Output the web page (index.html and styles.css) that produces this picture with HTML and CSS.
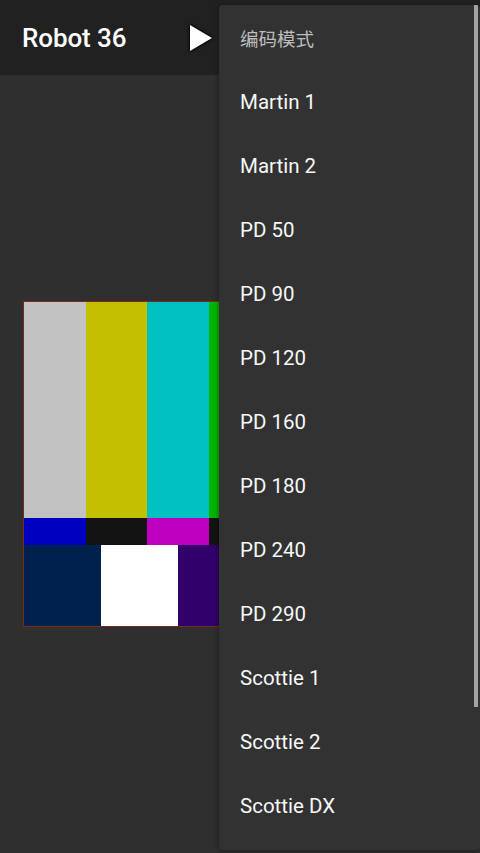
FILE: index.html
```html
<!DOCTYPE html>
<html>
<head>
<meta charset="utf-8">
<link rel="stylesheet" href="styles.css">
</head>
<body>
<div class="app">
  <header class="toolbar">
    <span class="title">Robot 36</span>
    <svg class="play" width="30" height="34" viewBox="0 0 30 34">
      <polygon points="4,4 26,17 4,30" fill="#ffffff"/>
    </svg>
  </header>
  <main class="content">
    <div class="pattern">
      <div class="row bars">
        <div class="c-gray"></div><div class="c-yellow"></div><div class="c-cyan"></div><div class="c-green"></div><div class="c-magenta"></div><div class="c-red"></div><div class="c-blue"></div>
      </div>
      <div class="row mid">
        <div class="c-blue"></div><div class="c-black"></div><div class="c-magenta"></div><div class="c-black"></div><div class="c-cyan"></div><div class="c-black"></div><div class="c-gray"></div>
      </div>
      <div class="row low">
        <div class="w5 c-navy"></div><div class="w5 c-white"></div><div class="w5 c-purple"></div><div class="w5 c-black"></div><div class="w1 c-dark"></div><div class="w1 c-black"></div><div class="w1 c-dim"></div><div class="w3 c-black"></div>
      </div>
    </div>
  </main>
  <nav class="menu">
    <ul class="menu-list">
      <li class="menu-head">编码模式</li>
      <li>Martin 1</li>
      <li>Martin 2</li>
      <li>PD 50</li>
      <li>PD 90</li>
      <li>PD 120</li>
      <li>PD 160</li>
      <li>PD 180</li>
      <li>PD 240</li>
      <li>PD 290</li>
      <li>Scottie 1</li>
      <li>Scottie 2</li>
      <li>Scottie DX</li>
    </ul>
    <div class="scrollbar"></div>
  </nav>
</div>
</body>
</html>
```

FILE: styles.css
```css
html, body {
  margin: 0;
  padding: 0;
}
body {
  background: #2f2f2f;
  font-family: Roboto, "Noto Sans CJK SC", "Liberation Sans", sans-serif;
  color: #f2f2f2;
}
.app {
  position: relative;
  width: 480px;
  height: 853px;
  display: flex;
  flex-direction: column;
  overflow: hidden;
}
.toolbar {
  height: 75px;
  flex: none;
  background: #212121;
  display: flex;
  align-items: center;
  padding-left: 22px;
}
.title {
  font-size: 26px;
  font-weight: 500;
  color: #ffffff;
  letter-spacing: -0.1px;
}
.play {
  margin-left: 60px;
  margin-top: 1px;
  filter: drop-shadow(0 0 1.5px rgba(0,0,0,0.95)) drop-shadow(0 0 1px rgba(0,0,0,0.8));
}
.content {
  flex: 1;
  display: flex;
  align-items: center;
  justify-content: center;
}
.pattern {
  width: 432px;
  height: 324px;
  border: 1px solid #7a2a1a;
  display: flex;
  flex-direction: column;
}
.row {
  display: flex;
}
.row > div {
  flex: 1;
}
.bars { height: 216px; }
.mid { height: 27px; }
.low { height: 81px; }
.low > .w5 { flex: 5; }
.low > .w1 { flex: 1.333; }
.low > .w3 { flex: 4; }
.c-gray { background: #c2c2c2; }
.c-yellow { background: #c2c000; }
.c-cyan { background: #00c0c0; }
.c-green { background: #00b400; }
.c-magenta { background: #c000c0; }
.c-red { background: #c00000; }
.c-blue { background: #0000c0; }
.c-black { background: #131313; }
.c-navy { background: #00214c; }
.c-white { background: #ffffff; }
.c-purple { background: #32006a; }
.c-dark { background: #090909; }
.c-dim { background: #1d1d1d; }

.menu {
  position: absolute;
  left: 219px;
  top: 5px;
  right: 0;
  bottom: 3px;
  background: #323232;
  border-radius: 4px;
  box-shadow: -1px 1px 4px rgba(0,0,0,0.35);
  overflow: hidden;
}
.menu-list {
  list-style: none;
  margin: 0;
  padding: 0;
}
.menu-list li {
  height: 64px;
  box-sizing: border-box;
  padding-top: 2px;
  display: flex;
  align-items: center;
  padding-left: 21px;
  font-size: 20.5px;
  color: #f7f7f7;
}
.menu-list li.menu-head {
  font-size: 18.5px;
  color: #bdbdbd;
}
.scrollbar {
  position: absolute;
  right: 2px;
  top: 0;
  width: 4px;
  height: 702px;
  background: #a3a3a3;
}
```
